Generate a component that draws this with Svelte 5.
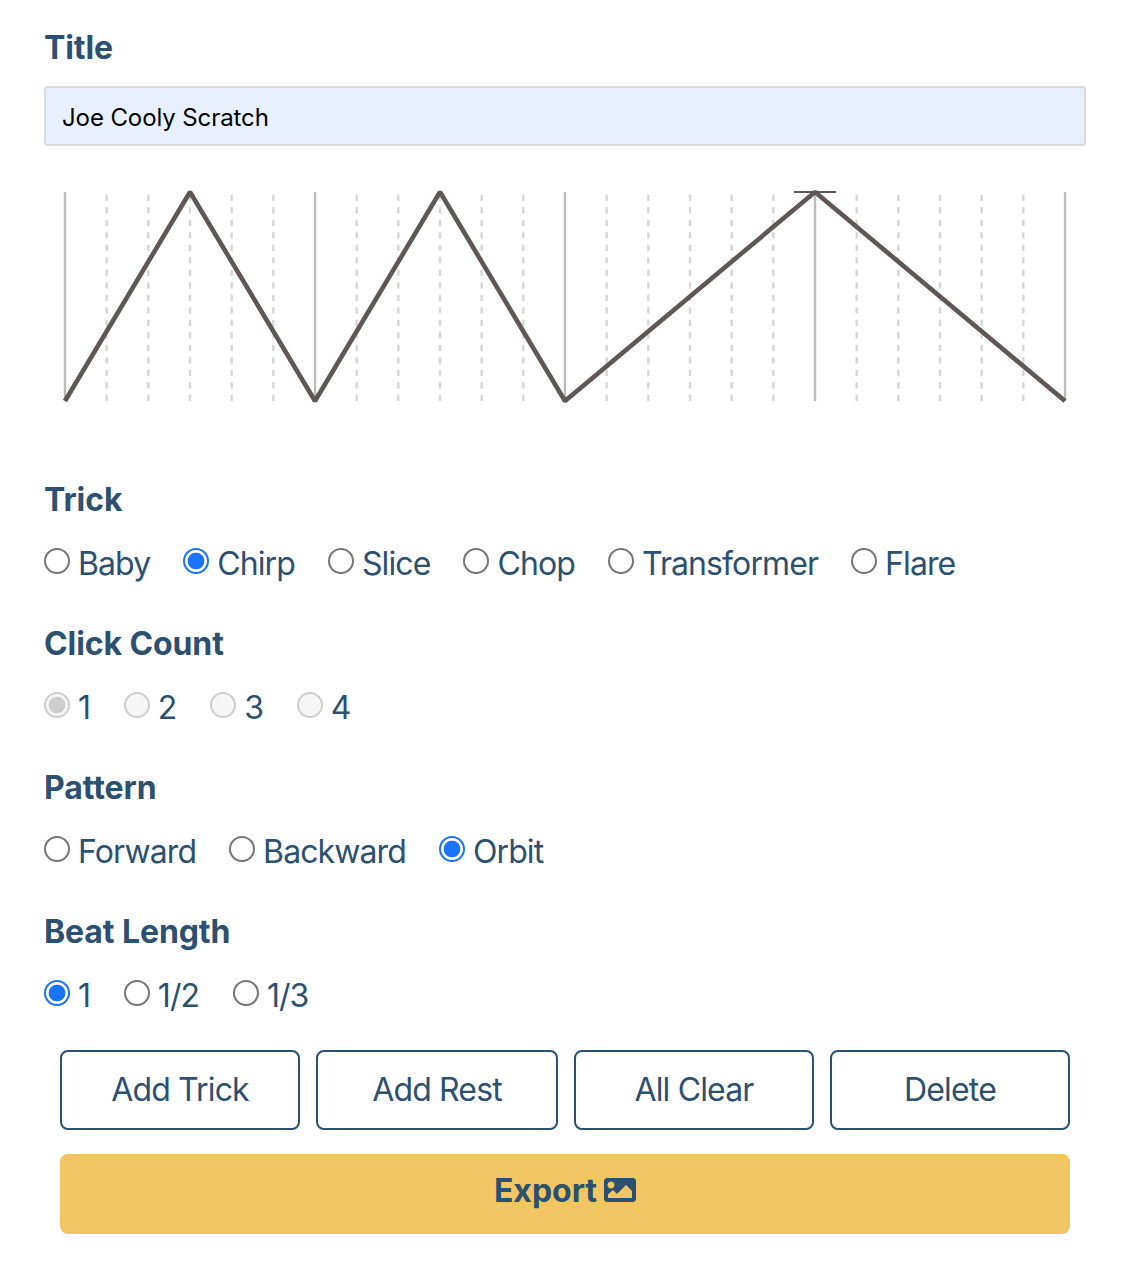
<script>
  const grid = Array.from({ length: 25 }, (_, i) => 65 + (i * 1000) / 24);
  const groups = [
    { title: 'Trick', name: 'trick', gap: 'wide', disabled: false, value: 'Chirp', options: ['Baby', 'Chirp', 'Slice', 'Chop', 'Transformer', 'Flare'] },
    { title: 'Click Count', name: 'count', gap: 'narrow', disabled: true, value: '1', options: ['1', '2', '3', '4'] },
    { title: 'Pattern', name: 'pattern', gap: 'wide', disabled: false, value: 'Orbit', options: ['Forward', 'Backward', 'Orbit'] },
    { title: 'Beat Length', name: 'beat', gap: 'narrow', disabled: false, value: '1', options: ['1', '1/2', '1/3'] }
  ];
  const actions = ['Add Trick', 'Add Rest', 'All Clear', 'Delete'];
</script>

<main class="page">
  <label class="heading" for="title">Title</label>
  <input id="title" class="title-input" type="text" value="Joe Cooly Scratch" />

  <svg class="chart" width="1042" height="250" viewBox="44 180 1042 250" aria-hidden="true">
    {#each grid as x, i}
      {#if i % 6 === 0}
        <line x1={x} y1="192" x2={x} y2="401" class="major" />
      {:else}
        <line x1={x} y1="401" x2={x} y2="192" class="minor" />
      {/if}
    {/each}
    <line x1="794" y1="192" x2="836" y2="192" class="cap" />
    <polyline class="wave" points="65,401 190,192 315,401 440,192 565,401 815,192 1065,401" />
  </svg>

  {#each groups as group}
    <section class="group">
      <h2 class="heading">{group.title}</h2>
      <div class="options" class:wide={group.gap === 'wide'}>
        {#each group.options as option}
          <label class="option">
            <input type="radio" name={group.name} checked={option === group.value} disabled={group.disabled} />
            <span>{option}</span>
          </label>
        {/each}
      </div>
    </section>
  {/each}

  <div class="actions">
    <div class="action-row">
      {#each actions as action}
        <button type="button" class="outline">{action}</button>
      {/each}
    </div>
    <button type="button" class="export">
      Export
      <svg width="32" height="24" viewBox="0 64 512 384" aria-hidden="true">
        <path d="M464 448H48c-26.500 0-48-21.500-48-48V112c0-26.500 21.500-48 48-48h416c26.500 0 48 21.500 48 48v288c0 26.500-21.500 48-48 48zM112 120c-30.900 0-56 25.100-56 56s25.100 56 56 56 56-25.100 56-56-25.100-56-56-56zM64 384h384V272l-87.500-87.500c-4.700-4.700-12.300-4.700-17 0L208 320l-55.500-55.500c-4.700-4.700-12.300-4.700-17 0L64 328v56z" />
      </svg>
    </button>
  </div>
</main>

<style>
  :global(body) {
    margin: 0;
    background: #fff;
  }

  .page {
    box-sizing: border-box;
    width: 1126px;
    height: 1264px;
    padding: 28px 40px 0 44px;
    font-family: Inter, "Liberation Sans", sans-serif;
    color: #2d5071;
  }

  .heading {
    display: block;
    margin: 0;
    font-size: 32px;
    line-height: 39px;
    font-weight: 650;
    letter-spacing: -0.1px;
    color: #2d5071;
  }

  .title-input {
    display: block;
    box-sizing: border-box;
    width: 1042px;
    height: 60px;
    margin: 19px 0 0;
    padding: 2px 16px 0;
    border: 2px solid #dbdbdb;
    border-radius: 4px;
    background: #e8f0fe;
    color: #000;
    font: 400 24px/1 Inter, "Liberation Sans", sans-serif;
    letter-spacing: -0.1px;
    outline: none;
  }

  .chart {
    display: block;
    margin-top: 34px;
  }

  .major {
    stroke: #bbb;
    stroke-width: 2.4;
  }

  .minor {
    stroke: #d6d6d6;
    stroke-width: 2.4;
    stroke-dasharray: 6.25 6.25;
  }

  .cap {
    stroke: #5d5757;
    stroke-width: 2.08;
  }

  .wave {
    fill: none;
    stroke: #5d5757;
    stroke-width: 4.6;
    stroke-linejoin: bevel;
  }

  .group {
    height: 144px;
  }

  .group:first-of-type {
    margin-top: 50px;
  }

  .options {
    display: flex;
    gap: 33.7px;
    margin-top: 25px;
    font-size: 32px;
    line-height: 40px;
    letter-spacing: -0.9px;
  }

  .options.wide {
    gap: 33px;
  }

  .option {
    display: flex;
    align-items: center;
    gap: 8px;
  }

  .option input {
    appearance: none;
    box-sizing: border-box;
    width: 26px;
    height: 26px;
    margin: 0 0 7px;
    border: 2px solid #767676;
    border-radius: 50%;
    background: #fff;
  }

  .option input:checked {
    border-color: #1a73f8;
    background: radial-gradient(circle, #1a73f8 0 8px, #fff 8.7px);
  }

  .option input:disabled {
    border-color: #cecece;
    background: #f6f6f6;
  }

  .option input:disabled:checked {
    background: radial-gradient(circle, #cecece 0 8px, #f6f6f6 8.7px);
  }

  .actions {
    margin: -6px 0 0 16px;
    width: 1010px;
  }

  .action-row {
    display: grid;
    grid-template-columns: 240px 242px 240px 240px;
    gap: 16px;
  }

  button {
    font-family: inherit;
    color: #2d5071;
    font-size: 32px;
  }

  .outline {
    height: 80px;
    padding: 0 0 2px;
    border: 2px solid #2d5071;
    border-radius: 8px;
    background: #fff;
    letter-spacing: -0.85px;
  }

  .export {
    display: flex;
    align-items: center;
    justify-content: center;
    gap: 7px;
    width: 100%;
    height: 80px;
    margin-top: 24px;
    padding: 0 0 8px;
    border: 0;
    border-radius: 8px;
    background: #f1c562;
    font-weight: 650;
  }

  .export svg {
    fill: #2d5071;
  }
</style>
